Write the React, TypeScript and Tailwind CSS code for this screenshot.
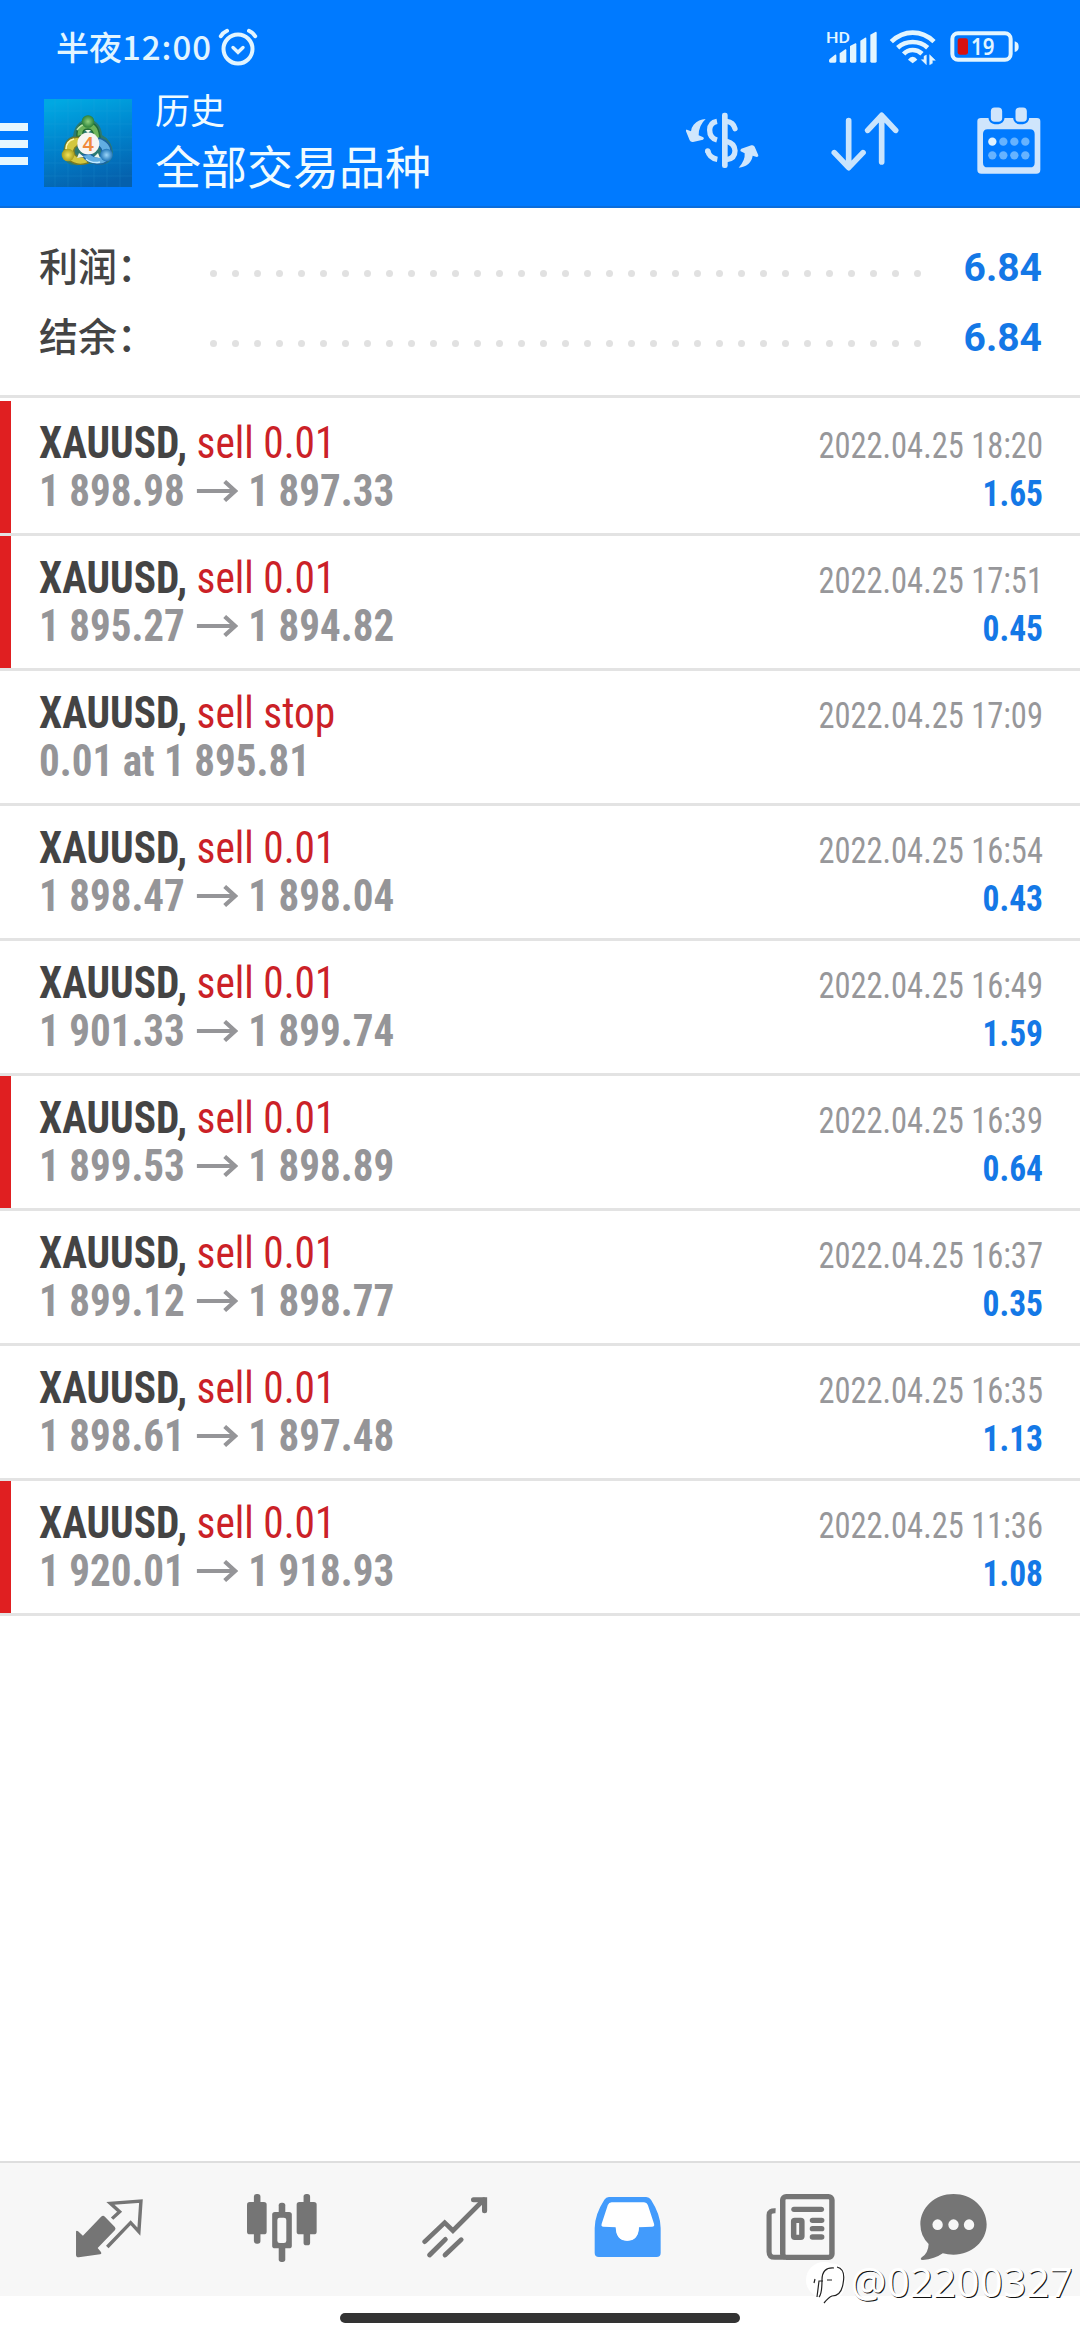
import type { ReactNode } from "react";

type Deal = {
  action: string;
  from?: string;
  to?: string;
  note?: string;
  time: string;
  profit?: string;
  marked?: boolean;
};

const deals: Deal[] = [
  { action: "sell 0.01", from: "1 898.98", to: "1 897.33", time: "2022.04.25 18:20", profit: "1.65", marked: true },
  { action: "sell 0.01", from: "1 895.27", to: "1 894.82", time: "2022.04.25 17:51", profit: "0.45", marked: true },
  { action: "sell stop", note: "0.01 at 1 895.81", time: "2022.04.25 17:09" },
  { action: "sell 0.01", from: "1 898.47", to: "1 898.04", time: "2022.04.25 16:54", profit: "0.43" },
  { action: "sell 0.01", from: "1 901.33", to: "1 899.74", time: "2022.04.25 16:49", profit: "1.59" },
  { action: "sell 0.01", from: "1 899.53", to: "1 898.89", time: "2022.04.25 16:39", profit: "0.64", marked: true },
  { action: "sell 0.01", from: "1 899.12", to: "1 898.77", time: "2022.04.25 16:37", profit: "0.35" },
  { action: "sell 0.01", from: "1 898.61", to: "1 897.48", time: "2022.04.25 16:35", profit: "1.13" },
  { action: "sell 0.01", from: "1 920.01", to: "1 918.93", time: "2022.04.25 11:36", profit: "1.08", marked: true },
];

function AlarmIcon() {
  return (
    <svg className="h-[38px] w-[40px]" viewBox="0 0 40 38" fill="none" stroke="#e2f5ff" strokeLinecap="round">
      <circle cx="20" cy="21" r="14.5" strokeWidth="4" />
      <path d="M2.8 8.2 Q5 4.6 9 2.8M37.2 8.2 Q35 4.6 31 2.8" strokeWidth="4" />
      <path d="M15 19.5l5 4.8 5-4.8" strokeWidth="3.4" />
    </svg>
  );
}

function SignalIcon() {
  return (
    <svg className="h-[38px] w-[54px]" viewBox="550 85 162 114" fill="#e2f5ff">
      <text x="553" y="129" fontSize="46" fontWeight="500" fontFamily="Roboto, sans-serif" textLength="72" lengthAdjust="spacingAndGlyphs">HD</text>
      <path d="M562 183 Q562 179 565 177 L580 165 Q584 163 584 168 V185 Q584 189 580 189 H566 Q562 189 562 185Z" />
      <path d="M594 161 L611 149 Q614 147 614 152 V185 Q614 189 610 189 H598 Q594 189 594 185Z" />
      <path d="M625 139 L641 131 Q644 130 644 134 V185 Q644 189 640 189 H629 Q625 189 625 185Z" />
      <path d="M656 123 L670 114 Q674 112 674 117 V185 Q674 189 670 189 H660 Q656 189 656 185Z" />
      <path d="M686 105 L701 97 Q705 95 705 100 V185 Q705 189 701 189 H690 Q686 189 686 185Z" />
    </svg>
  );
}

function WifiIcon() {
  return (
    <svg className="h-[38px] w-[50px]" viewBox="738 85 150 114" fill="none" stroke="#e2f5ff" strokeWidth="14">
      <path d="M748 126 Q777 99 812 99 Q848 99 876 126" />
      <path d="M767 144 Q786 127 812 127 Q838 127 857 144" />
      <path d="M785 163 Q796 151 812 151 Q828 151 840 162" />
      <path d="M798 180 Q804 171 812 171 Q820 171 826 180 L812 191Z" fill="#e2f5ff" stroke="none" />
      <path d="M853 166V195L838 180H846V170ZM863 195V165L880 182H871V191Z" fill="#e2f5ff" stroke="#e2f5ff" strokeWidth="1.5" />
    </svg>
  );
}

function BatteryIcon() {
  return (
    <svg className="h-[38px] w-[72px]" viewBox="922 85 216 114">
      <rect x="932" y="101" width="175" height="79" rx="17" fill="none" stroke="#e2f5ff" strokeWidth="12" />
      <path d="M1119 125 Q1131 128 1131 141 Q1131 154 1119 157Z" fill="#e2f5ff" />
      <rect x="948" y="116" width="31" height="49" rx="7" fill="#d8100f" />
      <text x="988" y="167" fontSize="68" fontWeight="600" fontFamily="'Noto Sans', sans-serif" fill="#e2f5ff" textLength="70" lengthAdjust="spacingAndGlyphs">19</text>
    </svg>
  );
}

function AppLogo() {
  return (
    <svg className="h-[88px] w-[88px]" viewBox="0 0 88 88">
      <defs>
        <linearGradient id="sky" x1="0.3" y1="0" x2="0.55" y2="1">
          <stop offset="0" stopColor="#00a8e2" />
          <stop offset="0.5" stopColor="#0082cc" />
          <stop offset="1" stopColor="#0560ac" />
        </linearGradient>
        <radialGradient id="green"><stop offset="0" stopColor="#8fd07c" /><stop offset="1" stopColor="#2a8039" /></radialGradient>
        <radialGradient id="gold"><stop offset="0" stopColor="#f3e45a" /><stop offset="1" stopColor="#a89e1e" /></radialGradient>
        <radialGradient id="blue"><stop offset="0" stopColor="#9bd6fa" /><stop offset="1" stopColor="#2176b8" /></radialGradient>
      </defs>
      <rect width="88" height="88" fill="url(#sky)" />
      <path d="M11 0V88M24 0V88M37 0V88M50 0V88M63 0V88M76 0V88M0 12H88M0 25H88M0 38H88M0 51H88M0 64H88M0 77H88" stroke="#35a9de" strokeWidth="0.8" opacity="0.2" />
      <path d="M44 20Q31 22 29 37Q19 40 19 56Q22 68 35 66Q44 63 54 66Q68 66 69 54Q68 41 58 36Q57 22 44 20Z" fill="#2c7a72" />
      <path d="M33 38Q32 24 44 23Q56 24 56 42L50 38Q49 30 44 30Q38 30 39 36Z" fill="#6db35a" stroke="#226c34" strokeWidth="1.4" />
      <path d="M44 64Q32 68 24 60Q17 48 26 40Q31 37 38 39L33 47Q28 50 31 56Q35 60 42 57Z" fill="#d3c73f" stroke="#7c7a22" strokeWidth="1.4" />
      <path d="M55 39Q68 43 67 55Q64 67 52 65Q42 63 38 56L46 55Q54 61 58 55Q59 49 52 46Z" fill="#62aee2" stroke="#1b639f" strokeWidth="1.4" />
      <g fill="none">
        <path d="M33 31Q37 25 43 25" stroke="#bbe6a8" strokeWidth="1.6" />
        <path d="M22 50Q22 42 30 40" stroke="#fff6a8" strokeWidth="1.6" />
        <path d="M42 60Q48 65 56 63" stroke="#c4ecff" strokeWidth="1.6" />
      </g>
      <path d="M41 31h6l-3 3ZM33 59l2-5 5 4ZM50 58l4-4 2 5Z" fill="#eef7ea" />
      <circle cx="44" cy="22.5" r="6.3" fill="url(#green)" />
      <circle cx="24" cy="56" r="6.3" fill="url(#gold)" />
      <circle cx="62.5" cy="56" r="6.3" fill="url(#blue)" />
      <circle cx="44.3" cy="44.5" r="11" fill="#f7f5f2" />
      <text x="44.3" y="51.5" textAnchor="middle" fontFamily="'Noto Sans', sans-serif" fontSize="20" fontWeight="600" fill="#f08a3c">4</text>
    </svg>
  );
}

function CurrencyIcon() {
  return (
    <svg className="h-[60px] w-[76px]" viewBox="132 330 228 180" fill="#cfe6fc">
      <rect x="246" y="338" width="17" height="166" rx="7" />
      <g fill="none" stroke="#cfe6fc" strokeWidth="16">
        <path d="M231 364 Q209 368 209 390 Q209 414 231 420" />
        <path d="M260 364 Q280 366 285 386" strokeLinecap="round" />
        <path d="M203 452 Q208 474 232 478" strokeLinecap="butt" />
        <path d="M260 424 Q284 430 285 452 Q285 475 260 479" />
      </g>
      <circle cx="203" cy="453" r="8" />
      <path d="M197 357 Q176 358 161 374 Q153 384 153 394 L141 389 Q137 388 138 394 L149 421 Q152 427 159 426 L189 419 Q194 416 190 412 L176 406 Q176 376 197 357Z" />
      <path d="M296 503 Q316 482 314 460 L302 454 Q299 450 304 446 L334 436 Q341 434 344 440 L355 466 Q356 471 350 471 L338 467 Q336 482 325 492 Q313 502 296 503Z" />
    </svg>
  );
}

function SortIcon() {
  return (
    <svg className="h-[60px] w-[70px]" viewBox="570 333 210 180" fill="none" stroke="#c9e4fd" strokeWidth="17" strokeLinecap="round" strokeLinejoin="round">
      <path d="M626 362V502M583 458l43 45 43-45M725 486V347M683 391l42-45 42 45" />
    </svg>
  );
}

function CalendarIcon() {
  return (
    <svg className="h-[67px] w-[64px]" viewBox="1010 321 192 201">
      <path fillRule="evenodd" fill="#cfe5fc" d="M1022 354H1190Q1200 354 1200 364V509Q1200 521 1188 521H1023Q1011 521 1011 509V364Q1011 354 1022 354ZM1042 388Q1028 388 1028 402V488Q1028 502 1042 502H1169Q1183 502 1183 488V402Q1183 388 1169 388Z" />
      <rect x="1048" y="319" width="41" height="50" rx="15" fill="#cfe5fc" stroke="#007aff" strokeWidth="7" />
      <rect x="1122" y="319" width="41" height="50" rx="15" fill="#cfe5fc" stroke="#007aff" strokeWidth="7" />
      <g fill="#66b3ff">
        <circle cx="1056" cy="425" r="12.5" fill="#dff2ff" />
        <circle cx="1089" cy="425" r="12.5" /><circle cx="1122" cy="425" r="12.5" /><circle cx="1155" cy="425" r="12.5" />
        <circle cx="1056" cy="466" r="12.5" /><circle cx="1089" cy="466" r="12.5" /><circle cx="1122" cy="466" r="12.5" /><circle cx="1155" cy="466" r="12.5" />
      </g>
    </svg>
  );
}

function Arrow() {
  return (
    <svg className="mr-[10px] mb-[6px] ml-[13px] inline-block h-[22px] w-[45px]" viewBox="0 0 42 22" preserveAspectRatio="none" fill="none" stroke="#959598" strokeWidth="4">
      <path d="M0 11H39" />
      <path d="M28 1.5L38.5 11L28 20.5" strokeWidth="4.2" />
    </svg>
  );
}

function SummaryRow({ label, value }: { label: string; value: string }) {
  return (
    <div className="flex h-[70px] items-center justify-between pr-[38px] pl-[39px]">
      <span className="-mt-[6px] w-[171px] font-['Noto_Sans_CJK_SC',sans-serif] text-[39px] leading-[70px] font-medium text-[#444]">{label}</span>
      <span className="mt-[12px] flex w-[711px] justify-between">
        {Array.from({ length: 33 }, (_, i) => (
          <i key={i} className="size-[7px] rounded-full bg-[#e1e1e1]" />
        ))}
      </span>
      <span className="flex-1 pt-[3px] text-right text-[39px] leading-[67px] font-bold text-[#1478e6]">{value}</span>
    </div>
  );
}

function DealRow({ deal }: { deal: Deal }) {
  return (
    <li className="flex h-[135px] border-b-3 border-[#e3e3e3]">
      <span className={deal.marked ? "w-[11px] bg-[#e01f21]" : "w-[11px]"} />
      <div className="flex-1 pt-[18px] pr-[37px] pl-[28px] font-stretch-condensed">
        <div className="flex h-[48px] items-baseline justify-between leading-[48px]">
          <span className="origin-left scale-x-[0.94] text-[44px] whitespace-pre">
            <b className="text-[#444]">XAUUSD,</b>
            <span className="text-[#cb2127]"> {deal.action}</span>
          </span>
          <span className="origin-right scale-x-[0.902] text-[36px] text-[#97979a]">{deal.time}</span>
        </div>
        <div className="flex h-[48px] items-baseline justify-between leading-[48px] font-bold">
          <span className="origin-left scale-x-[0.933] text-[44px] whitespace-nowrap text-[#959598]">
            {deal.note ?? (
              <>
                {deal.from}
                <Arrow />
                {deal.to}
              </>
            )}
          </span>
          <span className="origin-right scale-x-[0.93] text-[36px] text-[#1478e6]">{deal.profit}</span>
        </div>
      </div>
    </li>
  );
}

function NavItem({ children, last }: { children: ReactNode; last?: boolean }) {
  return <button className={last ? "flex w-[132px] justify-center" : "flex w-[173px] justify-center"}>{children}</button>;
}

function BottomNav() {
  return (
    <nav className="flex h-[135px] border-t-2 border-[#dedede] bg-[#f7f7f7] pt-[31px] pl-[22px]">
      <NavItem>
        <svg className="h-[68px] w-[68px]" preserveAspectRatio="none" viewBox="216 132 198 204" fill="#757575">
          <path d="M219 244Q221 240 225 244L239 257L292 200Q298 195 303 200L332 231Q336 236 332 241L282 294L291 305Q295 311 289 313L227 322Q219 322 219 315Z" />
          <path d="M324 206L346 185L319 160L408 153L402 245L378 218L310 291" fill="none" stroke="#757575" strokeWidth="10" />
        </svg>
      </NavItem>
      <NavItem>
        <svg className="h-[68px] w-[70px]" preserveAspectRatio="none" viewBox="715 132 203 204" fill="#757575">
          <rect x="735" y="132" width="19" height="149" rx="8" />
          <rect x="715" y="156" width="57" height="97" rx="8" />
          <rect x="879" y="132" width="19" height="154" rx="8" />
          <rect x="859" y="156" width="58" height="97" rx="8" />
          <rect x="807" y="158" width="19" height="178" rx="8" />
          <rect x="788" y="186" width="57" height="109" rx="8" />
          <rect x="803" y="203" width="26" height="76" rx="7" fill="#f7f7f7" />
        </svg>
      </NavItem>
      <NavItem>
        <svg className="h-[68px] w-[66px]" preserveAspectRatio="none" viewBox="1223 132 192 204" fill="none" stroke="#757575" strokeWidth="14">
          <path d="M1231 275L1289 218L1313 242L1403 149" strokeLinecap="round" />
          <path d="M1373 149H1405V182" strokeLinecap="round" strokeWidth="15" />
          <path d="M1245 315L1291 268M1290 315L1337 269" strokeLinecap="round" />
        </svg>
      </NavItem>
      <NavItem>
        <svg className="h-[68px] w-[67px]" preserveAspectRatio="none" viewBox="157 132 194 204">
          <path d="M205 146H305L330 212V232H178V212Z" fill="#fff" />
          <path fillRule="evenodd" fill="#429bfc" d="M200 141H308Q317 141 322 149Q350 194 350 234V309Q350 321 338 321H171Q159 321 159 309V234Q159 194 187 149Q192 141 200 141ZM208 157Q200 157 197 165L179 222Q177 230 184 230L220 232Q221 272 253 272Q286 272 287 232L325 230Q333 230 331 222L313 165Q310 157 302 157Z" />
          <path d="M220 230Q221 272 253 272Q286 272 287 230Z" fill="#fff" />
        </svg>
      </NavItem>
      <NavItem>
        <svg className="h-[68px] w-[69px]" preserveAspectRatio="none" viewBox="657 132 202 204" fill="none" stroke="#757575" strokeWidth="16">
          <rect x="706" y="140" width="144" height="182" rx="10" />
          <path d="M685 182Q666 181 666 195V305Q666 322 683 322H712" strokeWidth="15" />
          <path d="M739 178H819" strokeLinecap="round" />
          <rect x="738" y="211" width="24" height="51" rx="3" />
          <path d="M793 211H820M793 236H820M793 261H820" strokeLinecap="round" />
        </svg>
      </NavItem>
      <NavItem last>
        <svg className="h-[68px] w-[67px]" preserveAspectRatio="none" viewBox="1102 132 194 204">
          <path d="M1199 132C1252 132 1295 172 1295 223S1252 314 1199 314Q1182 314 1168 310Q1145 327 1110 330Q1100 329 1107 322Q1126 310 1127 282Q1103 258 1103 223C1103 172 1146 132 1199 132Z" fill="#757575" />
          <g fill="#f7f7f7">
            <ellipse cx="1153" cy="224" rx="15" ry="16" /><ellipse cx="1199" cy="224" rx="15" ry="16" /><ellipse cx="1244" cy="224" rx="15" ry="16" />
          </g>
        </svg>
      </NavItem>
    </nav>
  );
}

function Watermark() {
  return (
    <div className="absolute right-[7px] bottom-[32px] flex h-[52px] items-center">
      <svg className="h-[46px] w-[44px]" viewBox="0 0 44 46" fill="none">
        <circle cx="18" cy="21" r="18" fill="#fff" />
        <path d="M21 8Q36 4 37 18Q38 37 26 37Q23 38 18 43" stroke="#fff" strokeWidth="5" />
        <path d="M9 20L8 24M11 38L13 22H17M28 9Q16 8 16 21Q16 35 13 38M21 21H26M31 8Q40 10 37 25Q35 37 26 37Q23 38 18 44" stroke="#222" strokeWidth="1.2" />
      </svg>
      <span className="font-['Noto_Sans',sans-serif] text-[40px] leading-[52px] tracking-[0.4px] text-white [text-shadow:1px_1px_0_#111]">@02200327</span>
    </div>
  );
}

export default function App() {
  return (
    <div className="relative flex h-[2340px] w-[1080px] flex-col overflow-hidden bg-white font-[Roboto,'Noto_Sans_CJK_SC',sans-serif]">
      <header className="h-[208px] border-b-2 border-[#0b6ddb] bg-[#007aff] text-[#f0fbff]">
        <div className="flex h-[90px] justify-between pt-[28px] pr-[59px] pl-[56px]">
          <div className="flex">
            <span className="w-[162px] font-['Noto_Sans_CJK_SC',sans-serif] text-[33px] leading-[37px] font-medium whitespace-nowrap text-[#e2f5ff]">
              半夜<span className="tracking-[1px]">12:00</span>
            </span>
            <AlarmIcon />
          </div>
          <div className="flex">
            <SignalIcon />
            <span className="w-[9px]" />
            <WifiIcon />
            <span className="w-[11px]" />
            <BatteryIcon />
          </div>
        </div>
        <div className="flex h-[116px]">
          <button className="mt-[33px] flex w-[44px] flex-col gap-[9px]">
            <i className="h-[8px] w-[28px] bg-[#e6f7ff]" />
            <i className="h-[8px] w-[28px] bg-[#e6f7ff]" />
            <i className="h-[8px] w-[28px] bg-[#e6f7ff]" />
          </button>
          <div className="mt-[9px]">
            <AppLogo />
          </div>
          <div className="-mt-[3px] ml-[23px] flex-1 font-['Noto_Sans_CJK_SC',sans-serif]">
            <div className="h-[44px] text-[35px] leading-[44px]">历史</div>
            <div className="text-[46px] leading-[66px]">全部交易品种</div>
          </div>
          <div className="flex items-start pr-[39px]">
            <div className="mt-[20px] mr-[70px]"><CurrencyIcon /></div>
            <div className="mt-[21px] mr-[77px]"><SortIcon /></div>
            <div className="mt-[17px]"><CalendarIcon /></div>
          </div>
        </div>
      </header>

      <section className="h-[190px] border-b-3 border-[#e3e3e3] pt-[24px]">
        <SummaryRow label="利润：" value="6.84" />
        <SummaryRow label="结余：" value="6.84" />
      </section>

      <ul className="flex-1 pt-[3px]">
        {deals.map((deal) => (
          <DealRow key={deal.time} deal={deal} />
        ))}
      </ul>

      <BottomNav />
      <footer className="flex h-[44px] justify-center pt-[17px]">
        <span className="h-[10px] w-[400px] rounded-full bg-[#333]" />
      </footer>
      <Watermark />
    </div>
  );
}
